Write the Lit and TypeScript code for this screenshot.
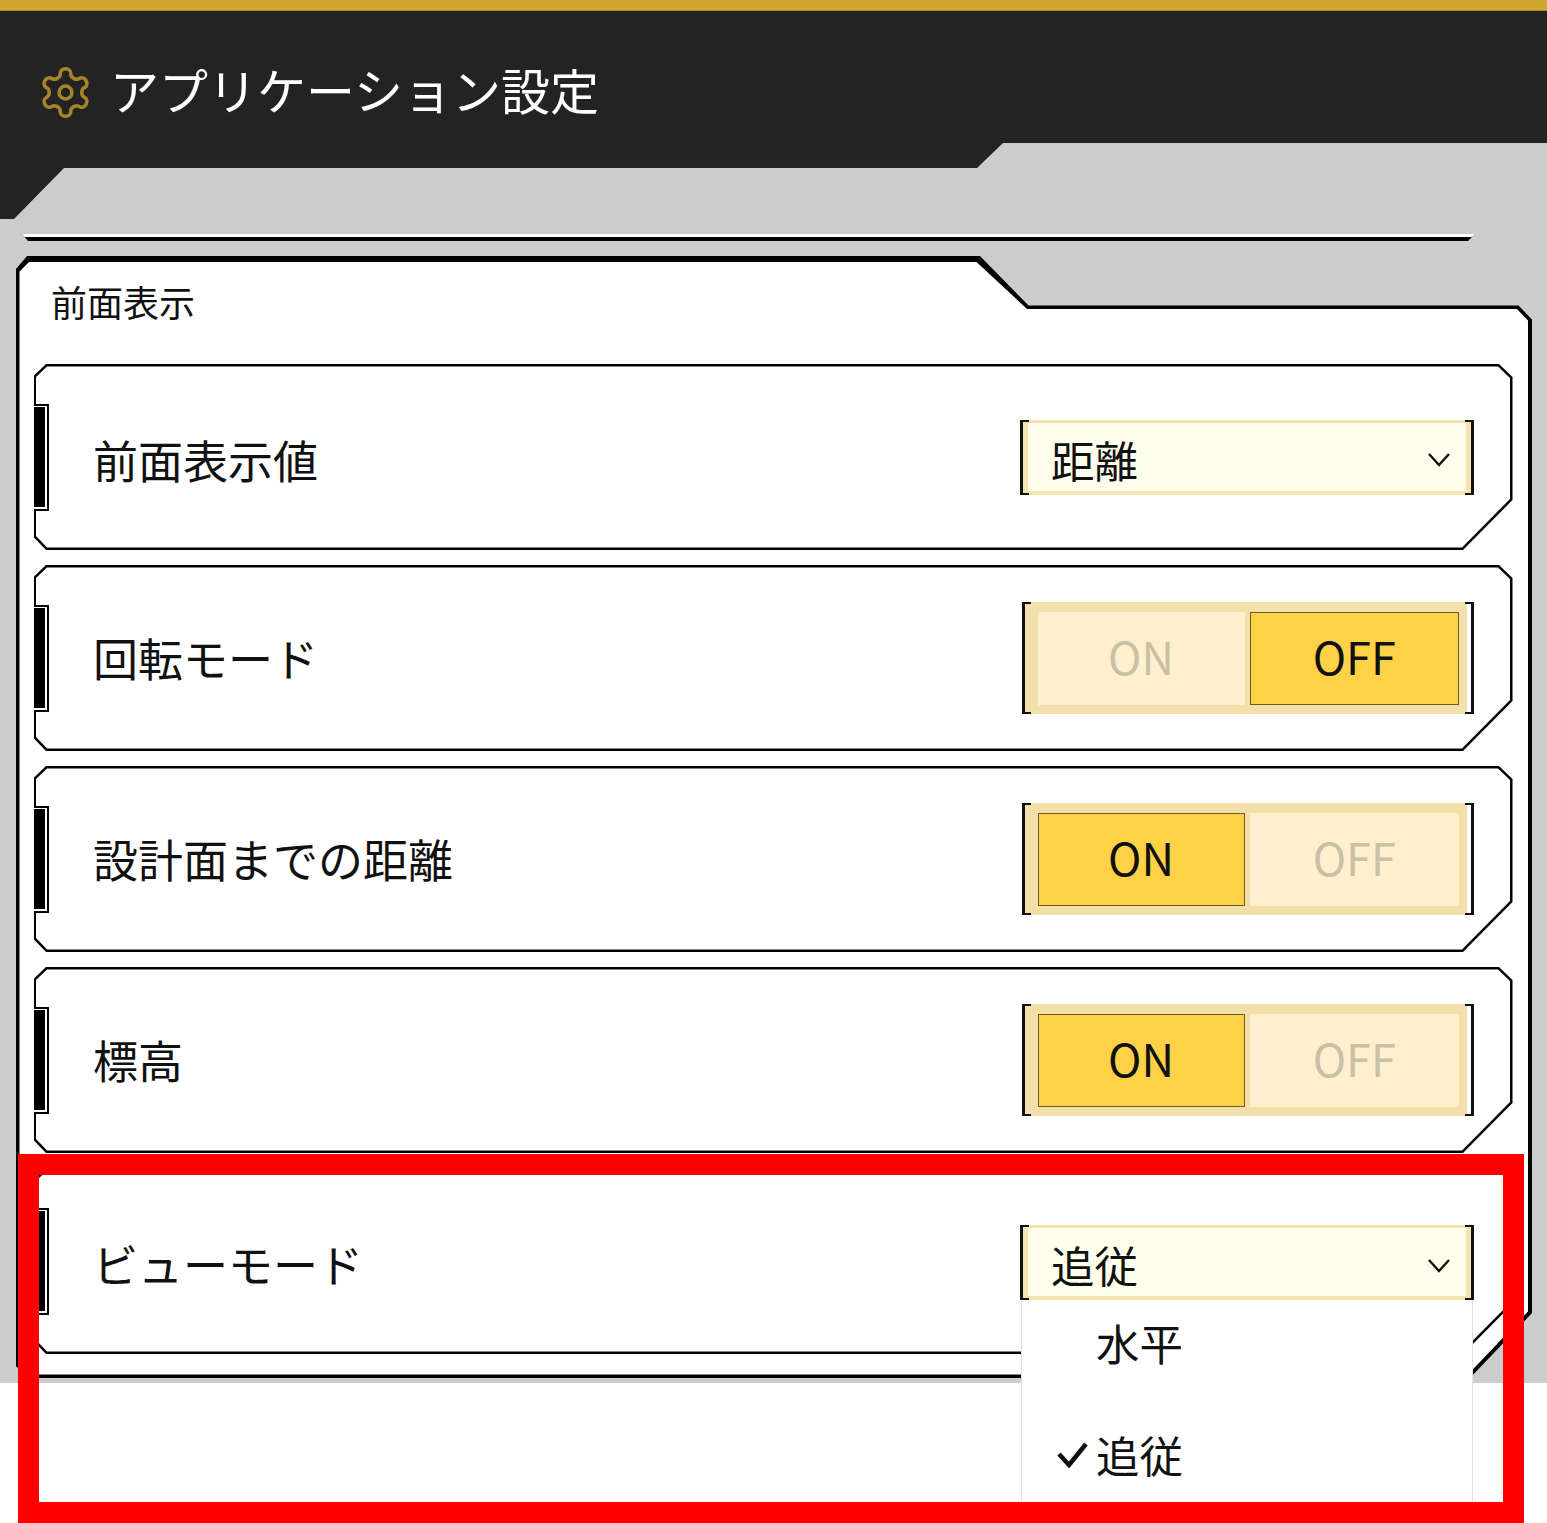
import { LitElement, html, css, svg } from "lit";
import { customElement } from "lit/decorators.js";

const bracketStyles = css`
  .bracketed { position: relative; box-sizing: border-box; }
  .bracketed::before, .bracketed::after {
    content: ""; position: absolute; top: 0; bottom: 0; width: 9px; box-sizing: border-box;
    border: solid #111; border-width: 2.5px 3px; z-index: 2; pointer-events: none;
  }
  .bracketed::before { left: 0; border-right: 0; }
  .bracketed::after { right: 0; border-left: 0; }
`;

@customElement("app-root")
export class AppRoot extends LitElement {
  static styles = [bracketStyles, css`
    :host { display: block; position: relative; width: 1547px; height: 1523px; overflow: hidden; background: #fff;
      font-family: "Noto Sans CJK JP", "Noto Sans", sans-serif; color: #111; }
    .screen { height: 1383px; background: #ccc; display: flex; flex-direction: column; }
    .topbar { height: 11px; background: #cfa832; border-bottom: 1px solid #a88a2c; box-sizing: border-box; flex: none; }
    .header { height: 208px; flex: none; box-sizing: border-box; background: #232323; color: #fff;
      clip-path: polygon(0 0, 100% 0, 100% 132px, 1003px 132px, 977px 157px, 64px 157px, 14px 208px, 0 208px);
      display: flex; align-items: flex-start; gap: 16.5px; padding: 43px 0 0 36.5px; }
    .gear { width: 57px; height: 57px; flex: none; margin-top: 9.5px; color: #a5852a; }
    .header h1 { margin: 0; font-size: 49px; font-weight: 400; line-height: 70px; }
    .peek { flex: none; height: 7px; margin: 15px 72px 0 22px; background: #000;
      clip-path: polygon(0 0, 100% 0, calc(100% - 7px) 100%, 6px 100%); position: relative; }
    .peek::before { content: ""; display: block; height: 2.5px; background: #fff; }
    .panel { flex: none; position: relative; isolation: isolate; box-sizing: border-box;
      margin: 14.5px 0 0 15.5px; width: 1516.5px; height: 1122.5px; padding: 25.5px 19px 0 18px; }
    .panel::before, .panel::after { content: ""; position: absolute; inset: 0; z-index: -1; }
    .panel::before { background: #000;
      clip-path: polygon(12px 0, 964px 0, 1013px 50px, 1503px 50px, 1516.5px 64px, 1516.5px 1057.5px, 1454.5px 1122.5px, 12px 1122.5px, 0 1110px, 0 14px); }
    .panel::after { background: #fff;
      clip-path: polygon(13.5px 6.5px, 961px 6.5px, 1011.5px 53.5px, 1501.5px 53.5px, 1512.5px 65px, 1512.5px 1056px, 1452.5px 1119px, 12px 1119px, 4px 1111px, 4px 16px); }
    .title { height: 40px; line-height: 40px; font-size: 36px; margin: 0 0 43px 17.5px; }
    .rows { display: flex; flex-direction: column; gap: 15px; }
  `];

  render() {
    return html`
      <div class="screen">
        <div class="topbar"></div>
        <header class="header">
          <svg class="gear" viewBox="0 0 24 24" fill="none" stroke="currentColor" stroke-width="1.5" stroke-linecap="round" stroke-linejoin="round">
            ${svg`<path d="M12.22 2h-.44a2 2 0 0 0-2 2v.18a2 2 0 0 1-1 1.73l-.43.25a2 2 0 0 1-2 0l-.15-.08a2 2 0 0 0-2.73.73l-.22.38a2 2 0 0 0 .73 2.73l.15.1a2 2 0 0 1 1 1.72v.51a2 2 0 0 1-1 1.74l-.15.09a2 2 0 0 0-.73 2.73l.22.38a2 2 0 0 0 2.73.73l.15-.08a2 2 0 0 1 2 0l.43.25a2 2 0 0 1 1 1.73V20a2 2 0 0 0 2 2h.44a2 2 0 0 0 2-2v-.18a2 2 0 0 1 1-1.73l.43-.25a2 2 0 0 1 2 0l.15.08a2 2 0 0 0 2.73-.73l.22-.39a2 2 0 0 0-.73-2.73l-.15-.08a2 2 0 0 1-1-1.74v-.5a2 2 0 0 1 1-1.74l.15-.09a2 2 0 0 0 .73-2.73l-.22-.38a2 2 0 0 0-2.73-.73l-.15.08a2 2 0 0 1-2 0l-.43-.25a2 2 0 0 1-1-1.73V4a2 2 0 0 0-2-2z"/><circle cx="12" cy="12" r="2.7"/>`}
          </svg>
          <h1>アプリケーション設定</h1>
        </header>
        <div class="peek"></div>
        <section class="panel">
          <div class="title">前面表示</div>
          <div class="rows">
            <setting-row low label="前面表示値"><select-box value="距離"></select-box></setting-row>
            <setting-row label="回転モード"><toggle-box active="off"></toggle-box></setting-row>
            <setting-row label="設計面までの距離"><toggle-box active="on"></toggle-box></setting-row>
            <setting-row label="標高"><toggle-box active="on"></toggle-box></setting-row>
            <setting-row low label="ビューモード"><select-box value="追従" open></select-box></setting-row>
          </div>
        </section>
      </div>
      <red-frame></red-frame>
    `;
  }
}

@customElement("red-frame")
export class RedFrame extends LitElement {
  static styles = css`
    :host { position: absolute; left: 18px; top: 1154px; width: 1506px; height: 369px; box-sizing: border-box;
      border: 21px solid #f00; z-index: 10; pointer-events: none; }
  `;
  render() { return html``; }
}

@customElement("setting-row")
export class SettingRow extends LitElement {
  static properties = { label: {}, low: { type: Boolean, reflect: true } };
  label = "";
  low = false;
  static styles = css`
    :host { display: flex; position: relative; isolation: isolate; height: 186px; align-items: center;
      justify-content: space-between; padding: 0 39px 0 59.5px; box-sizing: border-box; }
    :host::before, :host::after { content: ""; position: absolute; inset: 0; z-index: -1; }
    :host::before { background: #000;
      clip-path: polygon(12.5px 0, 1465.5px 0, 1479px 13px, 1479px 136px, 1429.5px 186px, 12.5px 186px, 0 173px, 0 12px); }
    :host::after { background: #fff;
      clip-path: polygon(13.5px 2.5px, 1464.5px 2.5px, 1476.5px 14px, 1476.5px 135px, 1428.5px 183.5px, 13.5px 183.5px, 2.5px 172px, 2.5px 13px); }
    .tab { position: absolute; left: 0; top: 39.5px; width: 15.5px; height: 107px; box-sizing: border-box; background: #fff;
      border: solid #000; border-width: 2px 2px 2px 0; display: flex; align-items: center; }
    .tab i { display: block; width: 11px; height: 100px; background: #000; }
    .label { font-size: 45px; line-height: 66px; }
    :host([low]) .label { margin-top: 5px; }
  `;
  render() {
    return html`<span class="tab"><i></i></span><span class="label">${this.label}</span><slot></slot>`;
  }
}

@customElement("select-box")
export class SelectBox extends LitElement {
  static properties = { value: {}, open: { type: Boolean, reflect: true } };
  value = "";
  open = false;
  static styles = [bracketStyles, css`
    :host { display: block; flex: none; }
    :host([open]) { margin-top: 3px; }
    .select { width: 454px; height: 75px; display: flex; align-items: center; justify-content: space-between; }
    .fill { position: absolute; inset: 0 3px; background: #fefeec; border: solid #f6e4b0; border-width: 3.5px 5px 4px; box-sizing: border-box; }
    .value { position: relative; font-size: 43.5px; line-height: 75px; padding: 4px 0 0 31px; }
    .chev { position: relative; width: 24px; height: 16px; margin: 6px 23px 0 0; }
    .menu { position: absolute; left: 1px; right: 1px; top: 100%; height: 240px; background: #fff;
      border: solid #e2e2e2; border-width: 0 1px; box-sizing: border-box; z-index: 5; font-size: 43.5px; }
    .item { display: flex; align-items: flex-start; height: 112px; line-height: 85px; }
    .mark { width: 74px; height: 85px; flex: none; display: flex; align-items: center; justify-content: flex-end; padding-right: 7px; box-sizing: border-box; }
    .mark svg { width: 32px; height: 26px; }
  `];
  render() {
    return html`
      <div class="select bracketed">
        <div class="fill"></div>
        <span class="value">${this.value}</span>
        <svg class="chev" viewBox="0 0 24 16" fill="none" stroke="#111" stroke-width="2.4">${svg`<path d="M2 2l10 11L22 2"/>`}</svg>
        ${this.open ? html`<div class="menu">
          <div class="item"><span class="mark"></span><span>水平</span></div>
          <div class="item"><span class="mark"><svg viewBox="0 0 32 26" fill="none" stroke="#111" stroke-width="4.5">${svg`<path d="M2 12l10 11L29 2"/>`}</svg></span><span>追従</span></div>
        </div>` : ""}
      </div>`;
  }
}

@customElement("toggle-box")
export class ToggleBox extends LitElement {
  static properties = { active: {} };
  active = "on";
  static styles = [bracketStyles, css`
    :host { display: block; flex: none; }
    .toggle { width: 452px; height: 112px; padding: 0 7px 0 3px; }
    .band { height: 100%; box-sizing: border-box; background: #f2dfaa; padding: 10px 8px 9px 12.5px; display: flex; gap: 5px; }
    .cell { display: flex; align-items: center; justify-content: center; box-sizing: border-box; padding-bottom: 6px;
      font-family: "Noto Sans CJK JP", "Noto Sans", sans-serif; font-size: 45px; background: #fef0ce; color: #c9c0a6; width: 207px; }
    .cell + .cell { width: 209.5px; }
    .cell.on { background: #ffd147; color: #111; border: 1px solid #6d5a27; }
  `];
  render() {
    return html`<div class="toggle bracketed"><div class="band">
      <div class="cell ${this.active === "on" ? "on" : ""}">ON</div>
      <div class="cell ${this.active === "off" ? "on" : ""}">OFF</div>
    </div></div>`;
  }
}
